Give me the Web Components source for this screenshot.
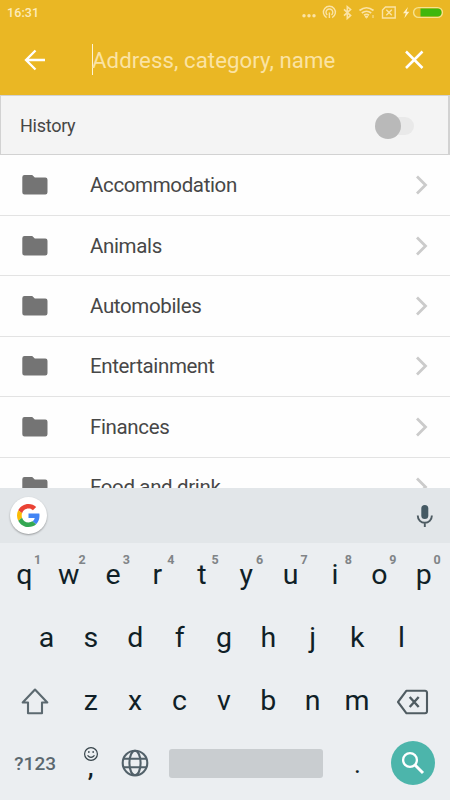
<!DOCTYPE html>
<html lang="en">
<head>
<meta charset="utf-8">
<title>Search</title>
<style>
html,body{margin:0;height:100%;overflow:hidden}
body{font-family:Roboto,sans-serif;background:#fefefe}
</style>
</head>
<body>
<search-screen></search-screen>
<script>
const define = (name, html) => {
  customElements.define(name, class extends HTMLElement {
    constructor() {
      super();
      this.attachShadow({mode: 'open'}).innerHTML =
        '<style>*{box-sizing:border-box}svg{display:block;flex:none}</style>' +
        (typeof html === 'function' ? html(this) : html);
    }
  });
};

define('status-bar', `
<style>
:host{display:flex;height:26px;align-items:center;justify-content:space-between;padding:0 6px 2px 7px;color:#fdecbc}
span{font-size:12.5px;font-weight:500;letter-spacing:.1px}
</style>
<span>16:31</span>
<svg width="144" height="18" viewBox="300 3 144 18" fill="none" stroke="#fbe3a5" stroke-width="1.4">
  <g fill="#fbe3a5" stroke="none"><circle cx="304" cy="15.8" r="1.700"/><circle cx="309" cy="15.8" r="1.700"/><circle cx="314" cy="15.8" r="1.700"/></g>
  <path d="M326.6 17.6a6 6 0 1 1 5.6 0M327.3 15a3.4 3.4 0 1 1 4.2 0M329.4 12.5v5.5"/>
  <path d="M344 9.4l6.6 6.2-3.3 2.9V6.7l3.3 2.8-6.6 6.2" stroke-width="1.600"/>
  <path d="M359.5 10.5q7-5.5 14 0M361.8 13q4.700-3.500 9.400 0M364 15.300q2.500-1.800 5 0" stroke-width="1.700"/>
  <path d="M366.500 18l-1.600-1.500h3.200zM373 15v3" fill="#fbe3a5" stroke-width="1"/>
  <path d="M385.500 7h9.700v11h-12.700v-8z"/><path d="M386.300 9.800l5.500 5.500M391.800 9.800l-5.500 5.500"/>
  <path d="M408 7l-5 6.300h2.800l-1.500 5 5-6.500h-2.800z" fill="#fff0c8" stroke="none"/>
  <rect x="413.600" y="7.600" width="28.800" height="9.800" rx="4.900" stroke="#f6e28f"/>
  <path d="M420.500 8.500h17a4 4 0 0 1 0 8h-17z" fill="#3fb70c" stroke="none"/>
</svg>`);

define('search-header', `
<style>
:host{display:flex;height:69px;align-items:center;padding:0 24px 2px 23px}
.field{display:flex;align-items:center;margin-left:45px;flex:1;font-size:22.200px;letter-spacing:.07px;line-height:30px;color:#fbe3a3;white-space:nowrap}
i{width:1px;height:31px;background:#fff4d5;margin-right:-1px}
</style>
<svg width="24" height="24" viewBox="0 0 24 24" fill="none" stroke="#fff" stroke-width="2.300"><path d="M22 12H3M12.500 2.500L3 12l9.500 9.500"/></svg>
<div class="field"><i></i><span>Address, category, name</span></div>
<svg width="24" height="24" viewBox="0 0 24 24" fill="none" stroke="#fff" stroke-width="2.500"><path d="M4 3.500l16.500 16.500M20.500 3.500L4 20"/></svg>`);

define('toggle-switch', `
<style>
:host{display:flex;align-items:center;width:40px;height:28px}
b{position:relative;width:26px;height:26px;border-radius:50%;background:#b9b9b9;flex:none;margin-left:1px}
u{width:26px;height:18px;border-radius:9px;background:#e9e9e9;margin-left:-13px}
</style><b></b><u></u>`);

define('history-row', `
<style>
:host{display:flex;height:60px;align-items:center;justify-content:space-between;padding:1px 34px 0 19px;background:#f4f4f4;border:1px solid #d2d2d2;border-right-width:2px;color:#464646;font-size:18px;letter-spacing:-.27px}
</style><slot></slot><toggle-switch></toggle-switch>`);

define('category-row', `
<style>
:host{display:flex;height:60.400px;flex:none;align-items:center;padding:0 21px 0 22px;border-bottom:1px solid #e3e3e3;color:#474747;font-size:20.500px;letter-spacing:-.36px}
div{flex:1;padding-left:42px}
</style>
<svg width="26" height="22" viewBox="0 0 26 22"><path fill="#747474" d="M2.500 1h7.700l2.600 2.500h10.500a2.200 2.200 0 0 1 2.200 2.200v12.600a2.200 2.200 0 0 1-2.200 2.200H2.500a2.200 2.200 0 0 1-2.200-2.200V3.200A2.200 2.200 0 0 1 2.500 1z"/></svg>
<div><slot></slot></div>
<svg width="14" height="22" viewBox="0 0 14 22"><path d="M2 2.500l8.500 8.500L2 19.500" fill="none" stroke="#cbcbcb" stroke-width="2.800"/></svg>`);

define('suggestion-strip', `
<style>
:host{display:flex;height:55px;align-items:center;justify-content:space-between;padding:0 13px 0 10px;background:#e2e6e9}
.g{width:37px;height:37px;border-radius:50%;background:#fff;display:grid;place-items:center;box-shadow:0 1px 2px #0005}
</style>
<div class="g"><svg width="23" height="23" viewBox="0 0 48 48">
<path fill="#EA4335" d="M24 9.500c3.540 0 6.710 1.220 9.210 3.600l6.850-6.850C35.900 2.380 30.470 0 24 0 14.620 0 6.510 5.380 2.560 13.220l7.980 6.190C12.430 13.720 17.740 9.500 24 9.500z"/>
<path fill="#4285F4" d="M46.980 24.550c0-1.570-.15-3.090-.38-4.550H24v9.020h12.940c-.58 2.960-2.260 5.480-4.780 7.180l7.730 6c4.510-4.180 7.090-10.360 7.090-17.650z"/>
<path fill="#FBBC05" d="M10.530 28.590c-.48-1.450-.76-2.990-.76-4.590s.27-3.140.76-4.590l-7.980-6.190C.92 16.460 0 20.120 0 24c0 3.880.92 7.540 2.560 10.780l7.970-6.190z"/>
<path fill="#34A853" d="M24 48c6.480 0 11.930-2.130 15.890-5.810l-7.730-6c-2.150 1.450-4.920 2.300-8.160 2.300-6.260 0-11.570-4.220-13.470-9.910l-7.980 6.190C6.510 42.620 14.620 48 24 48z"/></svg></div>
<svg width="24" height="24" viewBox="0 0 24 24"><rect x="8.300" y="1" width="7" height="14" rx="3.500" fill="#455a64"/><path d="M4.800 11.500v.5a7 6.800 0 0 0 14 0v-.5M11.800 19v4" fill="none" stroke="#4d5b62" stroke-width="1.900"/></svg>`);

define('letter-key', el => `
<style>
:host{display:flex;position:relative;width:44.400px;align-items:center;justify-content:center;color:#101f27;font-size:28.500px;line-height:34px}
sup{position:absolute;left:32px;top:9px;font-size:12.500px;line-height:15px;font-weight:700;color:#808487}
</style><slot></slot>${el.hasAttribute('hint') ? `<sup>${el.getAttribute('hint')}</sup>` : ''}`);

define('icon-key', `<style>:host{display:flex;align-items:center;justify-content:center}</style><slot></slot>`);

const keys = (s, hints) => [...s].map((c, i) => `<letter-key${hints ? ` hint="${hints[i]}"` : ''}>${c}</letter-key>`).join('');

define('key-board', `
<style>
:host{display:flex;flex-direction:column;height:257px;background:#ebeef1;padding:0 4px 0 2px}
.row{display:flex;height:63px;flex:none;justify-content:center}
.row:last-child{height:64px;padding-bottom:2px}
.wide{width:66.500px}
.end{flex:1}
.up{padding-top:2px}
.sym{font-size:19px;font-weight:500;color:#5b686f;letter-spacing:.1px}
.comma{width:44.400px;flex-direction:column;font-size:26px;font-weight:500;color:#101f27}
.col{display:flex;flex-direction:column;align-items:center;height:35px}
.col span{line-height:26px;height:20px;margin-top:-8px}
.globe{width:44.400px}
.space{width:178px}
.bar{width:154px;height:29px;border-radius:3px;background:#c9cdd0}
.dot{width:44.400px;font-size:26px;color:#101f27;padding-top:2px}
.go{width:44px;height:44px;border-radius:50%;background:#4cb5ab;display:grid;place-items:center}
</style>
<div class="row">${keys('qwertyuiop', '1234567890')}</div>
<div class="row">${keys('asdfghjkl')}</div>
<div class="row">
  <icon-key class="wide up"><svg width="30" height="30" viewBox="0 0 30 30"><path d="M15 2.500L2.700 15.500h5.300v10.800h14V15.500h5.300z" fill="none" stroke="#5c6970" stroke-width="2.100" stroke-linejoin="round"/></svg></icon-key>
  ${keys('zxcvbnm')}
  <icon-key class="end up"><svg width="34" height="28" viewBox="0 0 34 28" fill="none" stroke="#505c62" stroke-width="2.100"><path d="M10.500 2.700h18.500a2 2 0 0 1 2 2v18.600a2 2 0 0 1-2 2H10.500L2 14z" stroke-linejoin="round"/><path d="M13.700 9l9 10M22.700 9l-9 10" stroke-width="2.400"/></svg></icon-key>
</div>
<div class="row">
  <icon-key class="wide sym"><span>?123</span></icon-key>
  <icon-key class="comma"><div class="col"><svg width="16" height="16" viewBox="0 0 16 16" fill="none" stroke="#354249" stroke-width="1.200"><circle cx="8" cy="8" r="6.400"/><path d="M4.500 9.300q3.500 4 7 0"/><path d="M5 6h1.600M9.400 6H11" stroke-width="1.600"/></svg><span>,</span></div></icon-key>
  <icon-key class="globe"><svg width="28" height="28" viewBox="0 0 28 28" fill="none" stroke="#52616a" stroke-width="2.100"><circle cx="14" cy="14" r="12.300"/><ellipse cx="14" cy="14" rx="5.600" ry="12.300"/><path d="M2.500 9.700h23M2.500 18.300h23"/></svg></icon-key>
  <icon-key class="space"><div class="bar"></div></icon-key>
  <icon-key class="dot"><span>.</span></icon-key>
  <icon-key class="end"><div class="go"><svg width="26" height="26" viewBox="0 0 26 26" fill="none" stroke="#fff"><circle cx="10" cy="10" r="6.900" stroke-width="2.300"/><path d="M15 15l8 8" stroke-width="3"/></svg></div></icon-key>
</div>`);

define('search-screen', `
<style>
:host{display:flex;flex-direction:column;width:450px;height:800px;overflow:hidden}
header{background:#eab724;height:95px;flex:none}
.list{flex:1;min-height:0;overflow:hidden;display:flex;flex-direction:column;padding-top:.6px}
history-row,suggestion-strip,key-board{flex:none}
</style>
<header><status-bar></status-bar><search-header></search-header></header>
<history-row>History</history-row>
<div class="list">${['Accommodation','Animals','Automobiles','Entertainment','Finances','Food and drink'].map(t => `<category-row>${t}</category-row>`).join('')}</div>
<suggestion-strip></suggestion-strip>
<key-board></key-board>`);
</script>
</body>
</html>
